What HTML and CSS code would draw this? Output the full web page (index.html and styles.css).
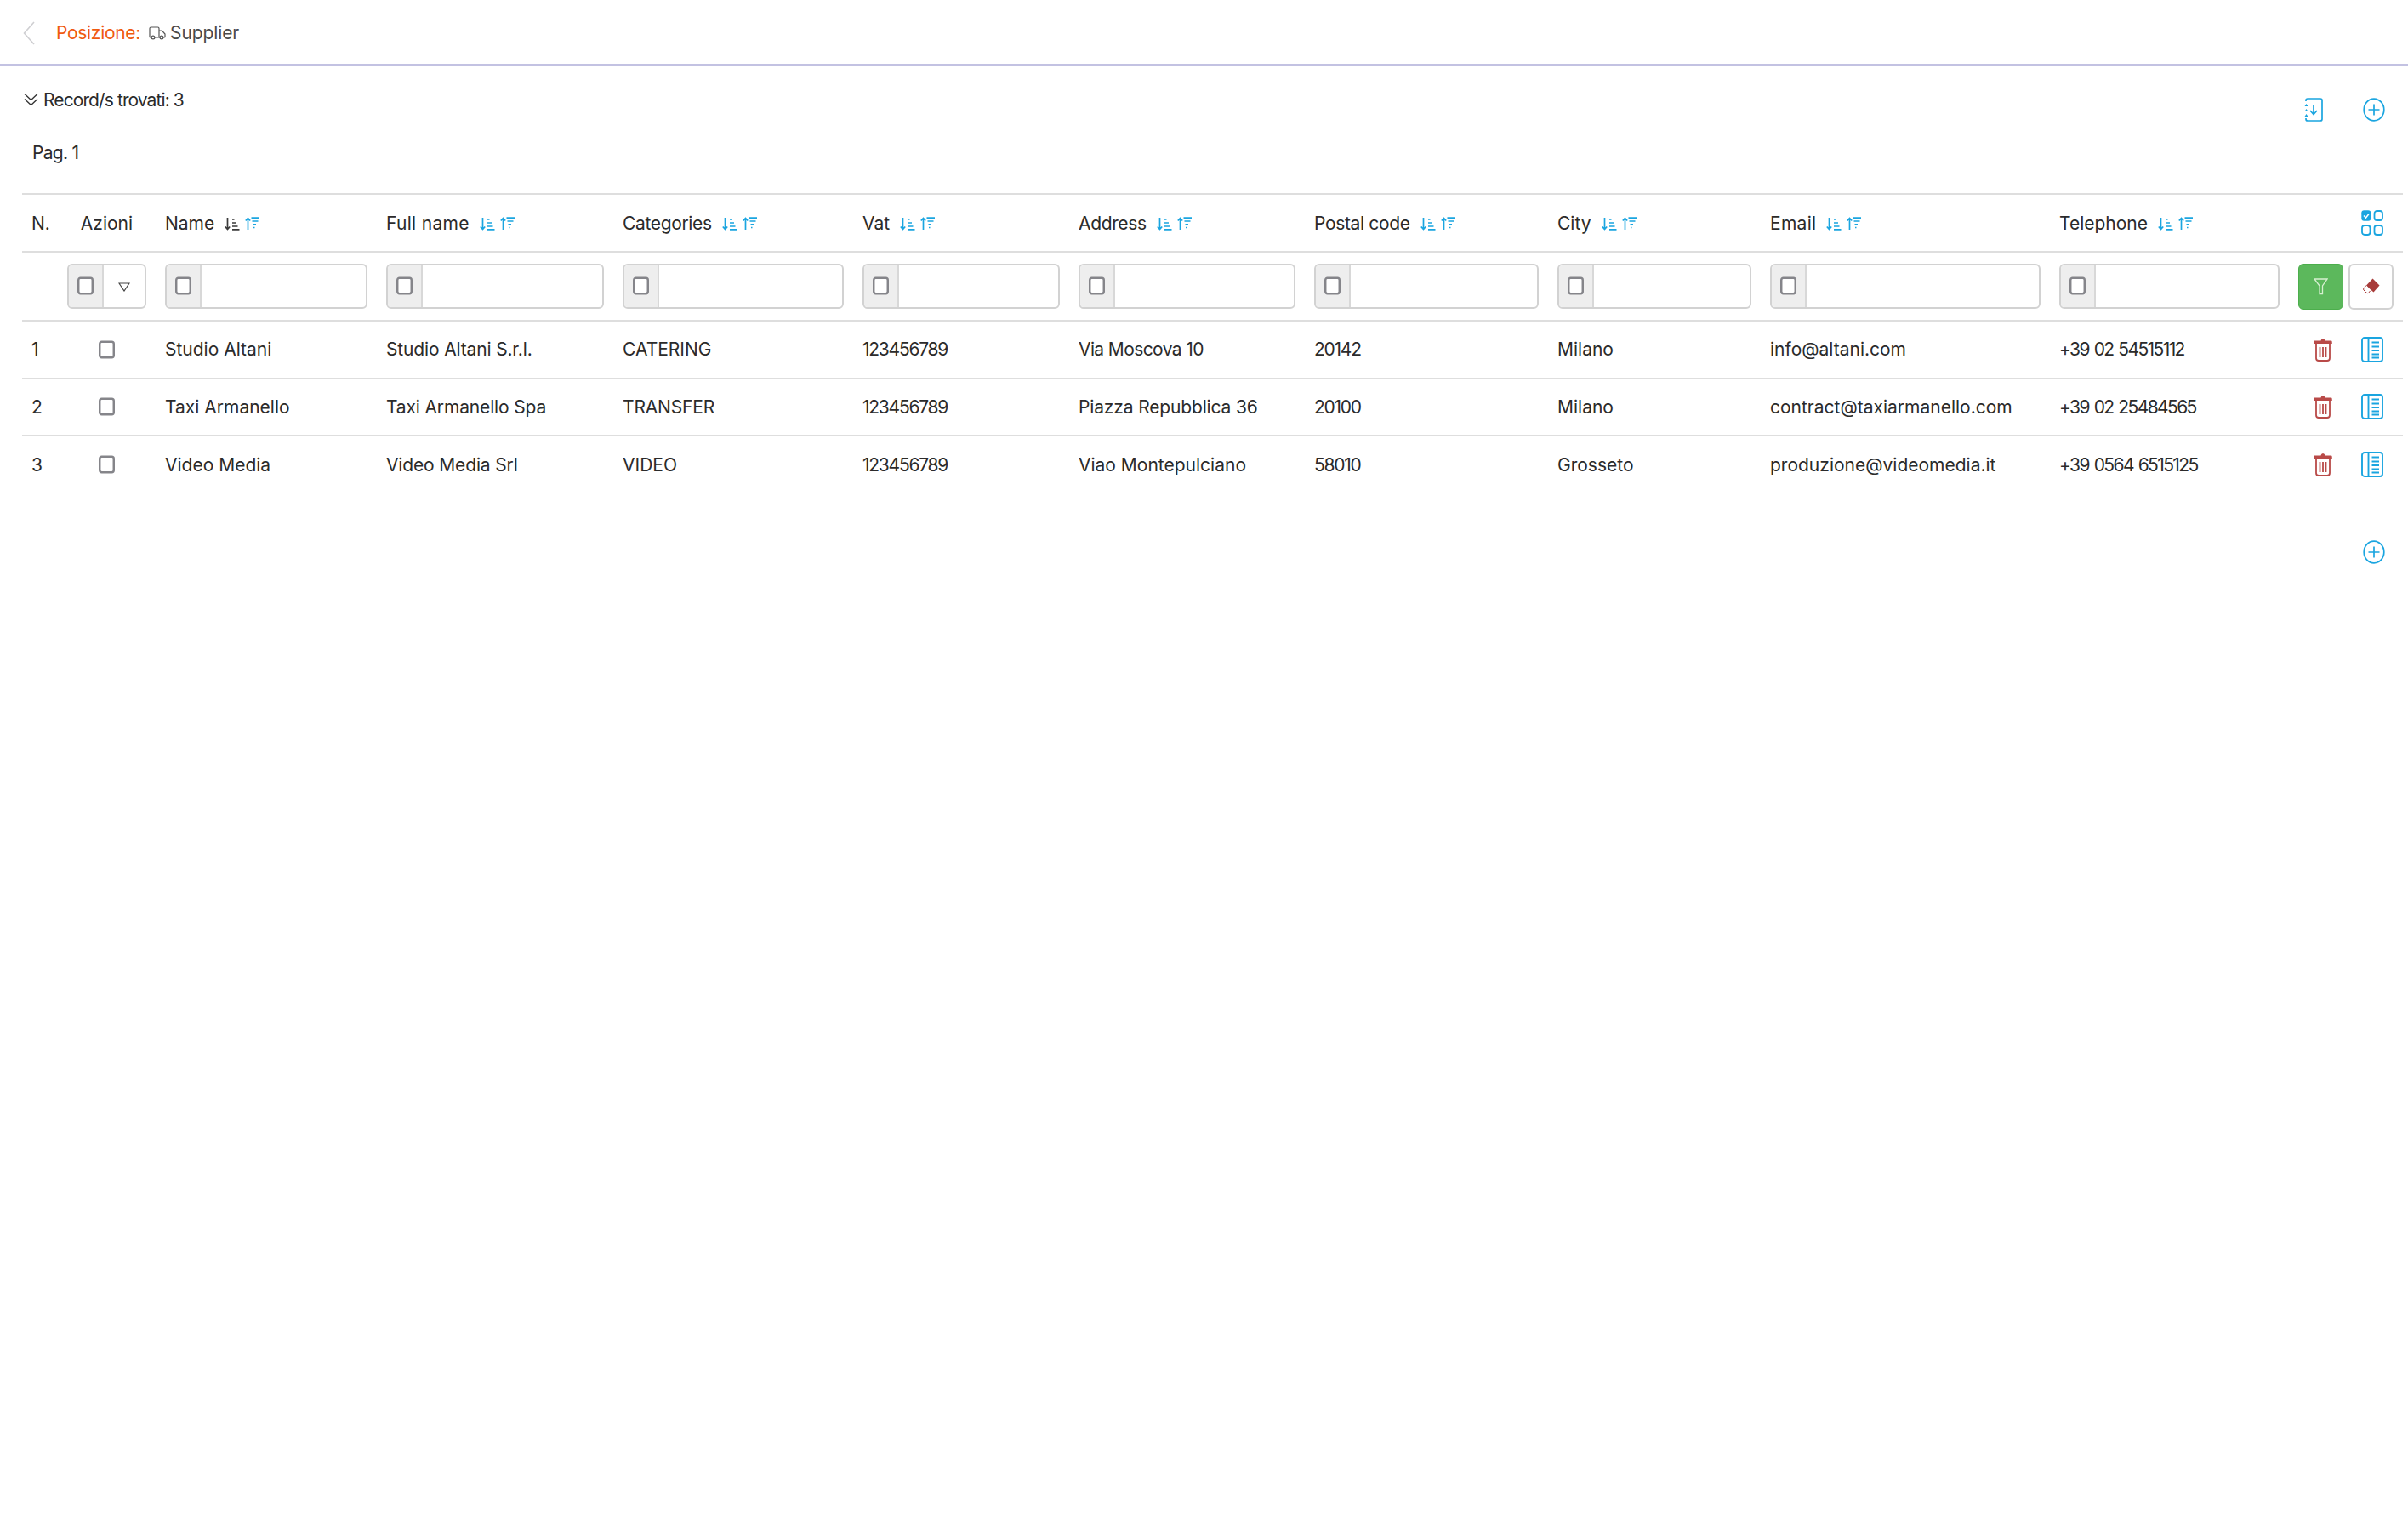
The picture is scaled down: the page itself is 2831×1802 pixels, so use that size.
FILE: index.html
```html
<!DOCTYPE html>
<html lang="it">
<head>
<meta charset="utf-8">
<title>Supplier</title>
<link rel="stylesheet" href="styles.css">
</head>
<body>
<svg class="defs" width="0" height="0">
  <symbol id="s-down" viewBox="0 0 18 16"><g fill="none" stroke="currentColor" stroke-width="1.7"><path d="M3.5 1v13.5M.8 11.500l2.700 3 2.700-3"/><path d="M9 3h2.500M9 7h5M9 11h6.500M9 14.800h8.500"/></g></symbol>
  <symbol id="s-up" viewBox="0 0 18 16"><g fill="none" stroke="currentColor" stroke-width="1.7"><path d="M3.500 15V1.500M.8 4.500l2.700-3 2.700 3"/><path d="M7.500 1.200h9.500M8.500 5h7M9.500 8.800h3.500M10 12.500h1.500"/></g></symbol>
  <symbol id="s-trash" viewBox="0 0 22 28"><path fill="#b94a48" d="M1 3.500h7.500q.5-2.500 2.500-2.500t2.500 2.500H21q.8 0 .8 2.500v1H.2V6q0-2.500.8-2.500z"/><g fill="none" stroke="#b94a48" stroke-width="1.800"><path d="M3 7v17q0 3 3 3h10q3 0 3-3V7"/><path d="M7.500 11v12M11 11v12M14.500 11v12"/></g></symbol>
  <symbol id="s-book" viewBox="0 0 26 30"><g fill="none" stroke="#1aa5e0" stroke-width="1.900"><rect x="1" y="1" width="24" height="28" rx="3"/><path d="M8.500 1v28"/><path d="M12.500 6.500h8.500M12.500 11.500h8.500M12.500 16h8.500M12.500 20.500h8.500M12.500 24.500h8.500"/></g></symbol>
  <symbol id="s-plus" viewBox="0 0 26 28"><g fill="none" stroke="#1aa5e0" stroke-width="1.700"><ellipse cx="13" cy="14" rx="11.800" ry="12.800"/><path d="M13 7.500v13M6.500 14h13"/></g></symbol>
  <symbol id="s-box" viewBox="0 0 20 22"><rect x="1.300" y="1.300" width="17.400" height="19.400" rx="2.500" fill="#fff" stroke="#85858a" stroke-width="2.600"/></symbol>
</svg>

<header class="topbar">
  <svg class="back" viewBox="0 0 14 28"><path d="M13 1L1.500 14 13 27" fill="none" stroke="#cfcfd2" stroke-width="1.600"/></svg>
  <span class="crumb-label">Posizione:</span>
  <svg class="truck" viewBox="0 0 20 16"><g fill="none" stroke="#555" stroke-width="1.200"><path d="M3 13H2q-1 0-1-1V2.500Q1 1 2.500 1h8q1.500 0 1.500 1.500V13H7"/><path d="M12 5h3.500l3.500 4v3q0 1-1 1h-1.500M12 13h1"/><circle cx="5" cy="13" r="1.900"/><circle cx="15" cy="13" r="1.900"/></g></svg>
  <span class="crumb-page">Supplier</span>
</header>

<main class="content">
  <section class="toolbar">
    <div class="toolbar-info">
      <div class="records">
        <svg class="chevrons" viewBox="0 0 17 16"><path d="M1 1.500l7.500 7 7.500-7M1 7.500l7.500 7 7.500-7" fill="none" stroke="#333" stroke-width="1.300"/></svg>
        <span class="records-text">Record/s trovati: 3</span>
      </div>
      <div class="page-no">Pag. 1</div>
    </div>
    <div class="toolbar-actions">
      <svg class="ic-import" viewBox="0 0 22 28"><g fill="none" stroke="#1aa5e0" stroke-width="1.700"><path d="M2 4V3q0-2 2-2h15q2 0 2 2v22q0 2-2 2H4q-2 0-2-2v-1"/><path d="M11 8v11M7 15l4 4.500 4-4.500"/></g><path fill="#1aa5e0" d="M.5 10l2-3 2 3zM.5 16l2-3 2 3zM.5 22l2-3 2 3z"/></svg>
      <svg class="ic-plus"><use href="#s-plus"/></svg>
    </div>
  </section>

  <table class="grid">
    <colgroup>
      <col class="c-n"><col class="c-az"><col class="c-name"><col class="c-full"><col class="c-cat"><col class="c-vat"><col class="c-addr"><col class="c-post"><col class="c-city"><col class="c-mail"><col class="c-tel"><col class="c-act">
    </colgroup>
    <thead>
      <tr class="head">
        <th>N.</th>
        <th class="center">Azioni</th>
        <th>Name<span class="sorts"><svg class="sort dark"><use href="#s-down"/></svg><svg class="sort"><use href="#s-up"/></svg></span></th>
        <th class="wide">Full name<span class="sorts"><svg class="sort"><use href="#s-down"/></svg><svg class="sort"><use href="#s-up"/></svg></span></th>
        <th class="narrow">Categories<span class="sorts"><svg class="sort"><use href="#s-down"/></svg><svg class="sort"><use href="#s-up"/></svg></span></th>
        <th>Vat<span class="sorts"><svg class="sort"><use href="#s-down"/></svg><svg class="sort"><use href="#s-up"/></svg></span></th>
        <th class="narrow">Address<span class="sorts"><svg class="sort"><use href="#s-down"/></svg><svg class="sort"><use href="#s-up"/></svg></span></th>
        <th class="narrow">Postal code<span class="sorts"><svg class="sort"><use href="#s-down"/></svg><svg class="sort"><use href="#s-up"/></svg></span></th>
        <th>City<span class="sorts"><svg class="sort"><use href="#s-down"/></svg><svg class="sort"><use href="#s-up"/></svg></span></th>
        <th class="wide">Email<span class="sorts"><svg class="sort"><use href="#s-down"/></svg><svg class="sort"><use href="#s-up"/></svg></span></th>
        <th>Telephone<span class="sorts"><svg class="sort"><use href="#s-down"/></svg><svg class="sort"><use href="#s-up"/></svg></span></th>
        <th class="end">
          <svg class="ic-grid" viewBox="0 0 26 30"><g fill="none" stroke="#1aa5e0" stroke-width="1.800"><rect x="15.500" y="1" width="9.500" height="11" rx="3"/><rect x="1" y="18" width="9.500" height="11" rx="3"/><rect x="15.500" y="18" width="9.500" height="11" rx="3"/></g><rect x=".3" y=".3" width="11" height="12.500" rx="3" fill="#1aa5e0"/><path d="M3 6.500l2.500 2.500 3.500-4.500" fill="none" stroke="#fff" stroke-width="1.500"/></svg>
        </th>
      </tr>
    </thead>
    <tbody>
      <tr class="filters">
        <td></td>
        <td class="az-cell"><div class="fgroup az"><span class="addon"><svg class="box"><use href="#s-box"/></svg></span><span class="caret"><svg viewBox="0 0 14 11"><path d="M1 1h12L7 10z" fill="none" stroke="#444" stroke-width="1.200"/></svg></span></div></td>
        <td><div class="fgroup"><span class="addon"><svg class="box"><use href="#s-box"/></svg></span></div></td>
        <td><div class="fgroup"><span class="addon"><svg class="box"><use href="#s-box"/></svg></span></div></td>
        <td><div class="fgroup"><span class="addon"><svg class="box"><use href="#s-box"/></svg></span></div></td>
        <td><div class="fgroup"><span class="addon"><svg class="box"><use href="#s-box"/></svg></span></div></td>
        <td><div class="fgroup"><span class="addon"><svg class="box"><use href="#s-box"/></svg></span></div></td>
        <td><div class="fgroup"><span class="addon"><svg class="box"><use href="#s-box"/></svg></span></div></td>
        <td><div class="fgroup"><span class="addon"><svg class="box"><use href="#s-box"/></svg></span></div></td>
        <td><div class="fgroup"><span class="addon"><svg class="box"><use href="#s-box"/></svg></span></div></td>
        <td><div class="fgroup"><span class="addon"><svg class="box"><use href="#s-box"/></svg></span></div></td>
        <td class="filter-btns">
          <div class="btns">
            <span class="btn go"><svg viewBox="0 0 17 20"><path d="M1 1h15l-5.500 8v9.500H7V9z" fill="none" stroke="#d6efd0" stroke-width="1.300"/></svg></span>
            <span class="btn clear"><svg viewBox="0 0 20 20"><path d="M11.500.5l8 8-7 8-4-3.500-4.500-4.500z" fill="#a83c3a"/><path d="M4 8.500L1 12q-1 1 0 2l3 3q1 1 2.500.500L8.500 15" fill="#fff" stroke="#a83c3a" stroke-width="1"/></svg></span>
          </div>
        </td>
      </tr>
      <tr class="row">
        <td>1</td><td class="center"><svg class="box big"><use href="#s-box"/></svg></td>
        <td>Studio Altani</td><td class="slim">Studio Altani S.r.l.</td><td>CATERING</td><td class="num">123456789</td><td class="tight">Via Moscova 10</td><td class="num">20142</td><td>Milano</td><td>info@altani.com</td><td class="num phone">+39 02 54515112</td>
        <td class="row-act"><div class="acts"><svg class="trash"><use href="#s-trash"/></svg><svg class="book"><use href="#s-book"/></svg></div></td>
      </tr>
      <tr class="row">
        <td>2</td><td class="center"><svg class="box big"><use href="#s-box"/></svg></td>
        <td>Taxi Armanello</td><td class="slim">Taxi Armanello Spa</td><td class="slim">TRANSFER</td><td class="num">123456789</td><td class="slim">Piazza Repubblica 36</td><td class="num">20100</td><td>Milano</td><td>contract@taxiarmanello.com</td><td class="num phone">+39 02 25484565</td>
        <td class="row-act"><div class="acts"><svg class="trash"><use href="#s-trash"/></svg><svg class="book"><use href="#s-book"/></svg></div></td>
      </tr>
      <tr class="row">
        <td>3</td><td class="center"><svg class="box big"><use href="#s-box"/></svg></td>
        <td>Video Media</td><td class="slim">Video Media Srl</td><td>VIDEO</td><td class="num">123456789</td><td>Viao Montepulciano</td><td class="num">58010</td><td>Grosseto</td><td>produzione@videomedia.it</td><td class="num phone">+39 0564 6515125</td>
        <td class="row-act"><div class="acts"><svg class="trash"><use href="#s-trash"/></svg><svg class="book"><use href="#s-book"/></svg></div></td>
      </tr>
    </tbody>
  </table>

  <div class="footer-actions"><svg class="ic-plus"><use href="#s-plus"/></svg></div>
</main>
</body>
</html>
```

FILE: styles.css
```css
* { box-sizing: border-box; }
html, body { margin: 0; background: #fff; }
body {
  font-family: Inter, "Open Sans", "Liberation Sans", sans-serif;
  font-size: 21px;
  color: #2b2b2b;
}
.defs { position: absolute; }

.topbar {
  height: 77px;
  display: flex;
  align-items: center;
  padding: 2px 0 0 27px;
  border-bottom: 2px solid #c3c2e2;
}
.back { width: 14px; height: 28px; margin-right: 25px; }
.crumb-label { color: #f05a10; letter-spacing: -.3px; }
.truck { width: 20px; height: 16px; margin: 0 5px 0 10px; }
.crumb-page { color: #4a4a4a; letter-spacing: -.1px; }

.toolbar {
  height: 150px;
  display: flex;
  justify-content: space-between;
  padding: 0 27px 0 28px;
}
.records { display: flex; align-items: center; gap: 6px; height: 24px; margin-top: 28px; }
.records-text { letter-spacing: -.9px; }
.chevrons { width: 17px; height: 16px; }
.page-no { margin: 39px 0 0 10px; height: 24px; line-height: 24px; letter-spacing: -.7px; }
.toolbar-actions { display: flex; align-items: center; gap: 47px; height: 28px; margin-top: 38px; }
.ic-import { width: 22px; height: 28px; }
.ic-plus { width: 26px; height: 28px; display: block; }

.grid {
  table-layout: fixed;
  border-collapse: collapse;
  width: 2799px;
  margin-left: 26px;
}
.c-n { width: 42px; } .c-az { width: 115px; } .c-name { width: 260px; } .c-full { width: 278px; }
.c-cat { width: 282px; } .c-vat { width: 254px; } .c-addr { width: 277px; } .c-post { width: 286px; }
.c-city { width: 250px; } .c-mail { width: 340px; } .c-tel { width: 281px; } .c-act { width: 134px; }

.grid th, .grid td { padding: 0 11px; text-align: left; font-weight: 400; white-space: nowrap; }
.grid tr { border-bottom: 2px solid #dedede; }
.grid tr.head { height: 68px; border-top: 2px solid #dedede; }
.grid tr.filters { height: 81px; }
.grid tr.row { height: 67.5px; }
.grid tr.row:last-child { border-bottom: 0; }
.grid th.center, .grid td.center { text-align: center; padding: 0; }
.grid th.wide { letter-spacing: .3px; }
.grid th.narrow { letter-spacing: -.35px; }
.grid td.num { letter-spacing: -1.25px; }
.grid td.phone { letter-spacing: -1.6px; word-spacing: 1.5px; }
.grid td.tight { letter-spacing: -.6px; }
.grid td.slim { letter-spacing: -.15px; }

.sorts { display: inline-flex; gap: 6px; margin-left: 12px; vertical-align: -1px; letter-spacing: 0; }
.sort { width: 18px; height: 16px; color: #1aa5e0; }
.sort.dark { color: #3a3a3a; }
.grid th.end { text-align: right; padding: 0 23px 0 0; }
.ic-grid { width: 26px; height: 30px; vertical-align: middle; }

.fgroup {
  display: flex;
  height: 53px;
  background: #fff;
  border: 2px solid #d2d2d2;
  border-radius: 6px;
  overflow: hidden;
}
.fgroup .addon {
  width: 41px;
  background: #eee;
  border-right: 2px solid #d8d8d8;
  display: flex;
  align-items: center;
  justify-content: center;
}
.grid td.az-cell { padding: 0 11px; }
.box { width: 19px; height: 22px; display: block; margin-top: -2px; }
.box.big { display: inline-block; vertical-align: middle; margin-top: -4px; }
.caret { flex: 1; display: flex; align-items: center; justify-content: center; padding-top: 2px; }
.caret svg { width: 14px; height: 11px; }

.grid td.filter-btns { padding: 0 11px; }
.btns { display: flex; gap: 6px; }
.btn { width: 53px; height: 54px; border-radius: 6px; display: flex; align-items: center; justify-content: center; }
.btn.go { background: #5cb85c; border: 1px solid #4cae4c; }
.btn.go svg { width: 17px; height: 20px; }
.btn.clear { border: 2px solid #d2d2d2; background: #fff; }
.btn.clear svg { width: 20px; height: 20px; }

.grid td.row-act { padding: 0 23px 0 0; }
.acts { display: flex; justify-content: flex-end; align-items: center; gap: 34px; }
.trash { width: 22px; height: 28px; }
.book { width: 26px; height: 30px; }

.footer-actions { display: flex; justify-content: flex-end; padding: 55px 27px 0 0; }
```
